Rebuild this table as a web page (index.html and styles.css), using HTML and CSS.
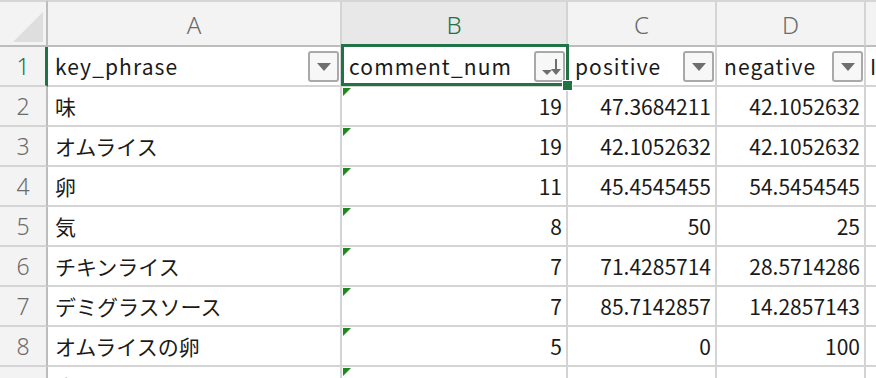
FILE: index.html
```html
<!DOCTYPE html>
<html lang="ja">

<head>
    <meta charset="UTF-8">
    <meta name="viewport" content="width=device-width, initial-scale=1.0">
    <title>sheet</title>
    <link rel="stylesheet" href="styles.css">
</head>

<body>
    <div class="sheet">
        <!-- column headers -->
        <div class="hd corner"><span class="corner__tri"></span></div>
        <div class="hd col">A</div>
        <div class="hd col col--active">B</div>
        <div class="hd col">C</div>
        <div class="hd col">D</div>
        <div class="hd col"></div>

        <!-- row 1: table header with filters -->
        <div class="rh rh--active">1</div>
        <div class="cell cell--filter">key_phrase<span class="filter"><i class="tri"></i></span></div>
        <div class="cell cell--filter cell--sel">comment_num<span class="filter filter--sort"><i class="tri tri--sm"></i><i class="arrow"></i></span>
            <span class="sel"><span class="sel__handle"></span></span>
        </div>
        <div class="cell cell--filter">positive<span class="filter"><i class="tri"></i></span></div>
        <div class="cell cell--filter">negative<span class="filter"><i class="tri"></i></span></div>
        <div class="cell cell--cut">I</div>

        <div class="rh">2</div>
        <div class="cell">味</div>
        <div class="cell num note">19</div>
        <div class="cell num">47.3684211</div>
        <div class="cell num">42.1052632</div>
        <div class="cell"></div>

        <div class="rh">3</div>
        <div class="cell">オムライス</div>
        <div class="cell num note">19</div>
        <div class="cell num">42.1052632</div>
        <div class="cell num">42.1052632</div>
        <div class="cell"></div>

        <div class="rh">4</div>
        <div class="cell">卵</div>
        <div class="cell num note">11</div>
        <div class="cell num">45.4545455</div>
        <div class="cell num">54.5454545</div>
        <div class="cell"></div>

        <div class="rh">5</div>
        <div class="cell">気</div>
        <div class="cell num note">8</div>
        <div class="cell num">50</div>
        <div class="cell num">25</div>
        <div class="cell"></div>

        <div class="rh">6</div>
        <div class="cell">チキンライス</div>
        <div class="cell num note">7</div>
        <div class="cell num">71.4285714</div>
        <div class="cell num">28.5714286</div>
        <div class="cell"></div>

        <div class="rh">7</div>
        <div class="cell">デミグラスソース</div>
        <div class="cell num note">7</div>
        <div class="cell num">85.7142857</div>
        <div class="cell num">14.2857143</div>
        <div class="cell"></div>

        <div class="rh">8</div>
        <div class="cell">オムライスの卵</div>
        <div class="cell num note">5</div>
        <div class="cell num">0</div>
        <div class="cell num">100</div>
        <div class="cell"></div>

        <div class="rh">9</div>
        <div class="cell">店</div>
        <div class="cell num note">4</div>
        <div class="cell num">75</div>
        <div class="cell num">25</div>
        <div class="cell"></div>
    </div>
</body>

</html>
```

FILE: styles.css
```css
* {
    margin: 0;
    padding: 0;
    box-sizing: border-box;
}

body {
    width: 876px;
    height: 378px;
    overflow: hidden;
    background: #fff;
    font-family: "Noto Sans CJK JP", "Noto Sans", sans-serif;
    color: #1a1a1a;
}

.sheet {
    display: grid;
    grid-template-columns: 48px 294px 226px 149px 149px 60px;
    grid-template-rows: 47px repeat(9, 40px);
}

/* headers */
.hd {
    background: #f3f3f3;
    border-top: 2px solid #d6d6d6;
    border-right: 2px solid #d4d4d4;
    border-bottom: 2px solid #bdbdbd;
    display: flex;
    align-items: center;
    justify-content: center;
    font-family: "Noto Sans", sans-serif;
    font-weight: 300;
    font-size: 24px;
    color: #6b6b6b;
    padding-top: 1px;
}

.corner {
    position: relative;
    border-right-color: #bdbdbd;
}

.corner__tri {
    position: absolute;
    right: 3px;
    bottom: 3px;
    width: 0;
    height: 0;
    border-left: 30px solid transparent;
    border-bottom: 30px solid #dedede;
}

.col--active {
    background: #e8e8e8;
    color: #217346;
}

.rh {
    background: #f3f3f3;
    border-right: 2px solid #bdbdbd;
    border-bottom: 2px solid #d4d4d4;
    display: flex;
    align-items: center;
    justify-content: center;
    font-family: "Noto Sans", sans-serif;
    font-weight: 300;
    font-size: 23px;
    color: #6b6b6b;
}

.rh--active {
    color: #217346;
    border-right: 3px solid #217346;
    padding-left: 1px;
}

/* cells */
.cell {
    position: relative;
    border-right: 2px solid #d4d4d4;
    border-bottom: 2px solid #d4d4d4;
    display: flex;
    align-items: center;
    padding: 0 5px 0 7px;
    font-size: 21px;
    white-space: nowrap;
    overflow: hidden;
}

.cell--filter {
    justify-content: space-between;
    padding-right: 1px;
    letter-spacing: 1.1px;
    overflow: visible;
}

.cell--sel {
    z-index: 2;
}

.cell--cut {
    padding-left: 4px;
}

.num {
    justify-content: flex-end;
    padding-right: 4px;
}

.note::before {
    content: "";
    position: absolute;
    left: 1px;
    top: 1px;
    border-top: 8px solid #1a8a1a;
    border-right: 8px solid transparent;
}

/* filter dropdown buttons */
.filter {
    width: 31px;
    height: 31px;
    flex: none;
    border: 2px solid #a9a9a9;
    border-radius: 3px;
    background: #f7f7f7;
    display: flex;
    align-items: center;
    justify-content: center;
    gap: 3px;
}

.tri {
    width: 0;
    height: 0;
    border-left: 7px solid transparent;
    border-right: 7px solid transparent;
    border-top: 8px solid #6e6e6e;
    margin-top: 2px;
}

.tri--sm {
    border-left-width: 5px;
    border-right-width: 5px;
    border-top-width: 5px;
    margin-top: 12px;
}

.arrow {
    position: relative;
    width: 2px;
    height: 15px;
    margin-top: 1px;
    background: #6e6e6e;
}

.arrow::after {
    content: "";
    position: absolute;
    left: -4px;
    bottom: -1px;
    width: 0;
    height: 0;
    border-left: 5px solid transparent;
    border-right: 5px solid transparent;
    border-top: 6px solid #6e6e6e;
}

/* active cell outline */
.sel {
    position: absolute;
    left: -1px;
    top: -3px;
    right: -3px;
    bottom: -1px;
    border: 3px solid #217346;
    pointer-events: none;
}

.sel__handle {
    position: absolute;
    right: -7px;
    bottom: -8px;
    width: 11px;
    height: 11px;
    background: #217346;
    border: 1px solid #fff;
}
```
